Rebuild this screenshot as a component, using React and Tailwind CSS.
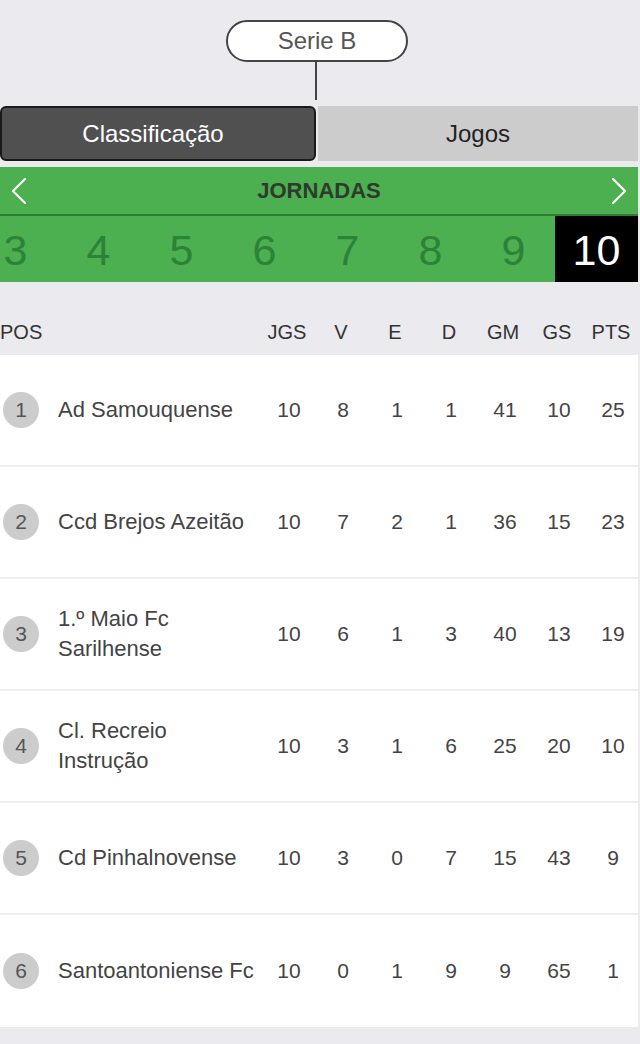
import React from "react";

const rounds = [1, 2, 3, 4, 5, 6, 7, 8, 9, 10];

const teams = [
  { pos: 1, name: "Ad Samouquense", s: [10, 8, 1, 1, 41, 10, 25] },
  { pos: 2, name: "Ccd Brejos Azeitão", s: [10, 7, 2, 1, 36, 15, 23] },
  { pos: 3, name: "1.º Maio Fc Sarilhense", s: [10, 6, 1, 3, 40, 13, 19] },
  { pos: 4, name: "Cl. Recreio Instrução", s: [10, 3, 1, 6, 25, 20, 10] },
  { pos: 5, name: "Cd Pinhalnovense", s: [10, 3, 0, 7, 15, 43, 9] },
  { pos: 6, name: "Santoantoniense Fc", s: [10, 0, 1, 9, 9, 65, 1] },
];

const cols = ["JGS", "V", "E", "D", "GM", "GS", "PTS"];

function Chevron({ dir }) {
  return (
    <svg width="16" height="26" viewBox="0 0 16 26" fill="none" stroke="white" strokeWidth="2.2" strokeLinecap="round" strokeLinejoin="round">
      {dir === "left" ? <polyline points="14,1 2,13 14,25" /> : <polyline points="2,1 14,13 2,25" />}
    </svg>
  );
}

export default function App() {
  return (
    <div
      className="min-h-[1044px] w-[640px] bg-[#eaeaef] text-[#444]"
      style={{ fontFamily: '"Liberation Sans", Arial, sans-serif' }}
    >
      <div className="w-[638px]">
        <div className="pt-[20px] pl-[226px]">
          <div className="flex h-[42px] w-[182px] items-center justify-center rounded-full border-2 border-[#444] bg-white text-[24px] text-[#555]">
            Serie B
          </div>
        </div>
        <div className="ml-[315px] h-[38px] w-[2px] bg-[#444]" />

        <div className="mt-[6px] flex h-[55px] gap-[2px]">
          <div className="flex w-[316px] items-center justify-center rounded-[6px] border-2 border-[#1a1a1a] bg-[#505050] pr-[10px] text-[24px] text-white">
            Classificação
          </div>
          <div className="flex flex-1 items-center justify-center bg-[#cccccc] text-[24px] text-[#222]">
            Jogos
          </div>
        </div>

        <div className="mt-[6px] bg-[#4caf50]">
          <div className="flex h-[49px] items-center justify-between border-b-2 border-[#2e7d32] px-[11px]">
            <Chevron dir="left" />
            <span className="text-[22px] font-bold text-[#2f3a2f]">JORNADAS</span>
            <Chevron dir="right" />
          </div>
          <div className="flex h-[66px] justify-end overflow-hidden pt-[3px]">
            {rounds.map((r) => (
              <div
                key={r}
                className={
                  r === 10
                    ? "-mt-[3px] flex w-[83px] shrink-0 items-center justify-center bg-black pt-[3px] text-[43px] text-white"
                    : "flex w-[83px] shrink-0 items-center justify-center text-[43px] text-[#2c8238]"
                }
              >
                {r}
              </div>
            ))}
          </div>
        </div>

        <div className="flex h-[73px] items-end pb-[8px] text-[20px] text-[#333]">
          <div className="w-[262px]">POS</div>
          {cols.map((c) => (
            <div key={c} className="w-[54px] shrink-0 text-center">
              {c}
            </div>
          ))}
        </div>

        <div className="bg-white">
          {teams.map((t, i) => (
            <div
              key={t.pos}
              className={
                i < teams.length - 1
                  ? "flex h-[112px] items-center border-b-2 border-[#eeeeee]"
                  : "flex h-[112px] items-center"
              }
            >
              <div className="ml-[3px] flex h-[36px] w-[36px] shrink-0 items-center justify-center rounded-full bg-[#cccccc] text-[21px] text-[#555]">
                {t.pos}
              </div>
              <div className="ml-[19px] w-[204px] shrink-0 pr-[4px] text-[22px] leading-[30px] text-[#444]">
                {t.name}
              </div>
              {t.s.map((v, k) => (
                <div key={k} className="w-[54px] shrink-0 text-center text-[21px] text-[#444]">
                  {v}
                </div>
              ))}
            </div>
          ))}
        </div>
      </div>
    </div>
  );
}
